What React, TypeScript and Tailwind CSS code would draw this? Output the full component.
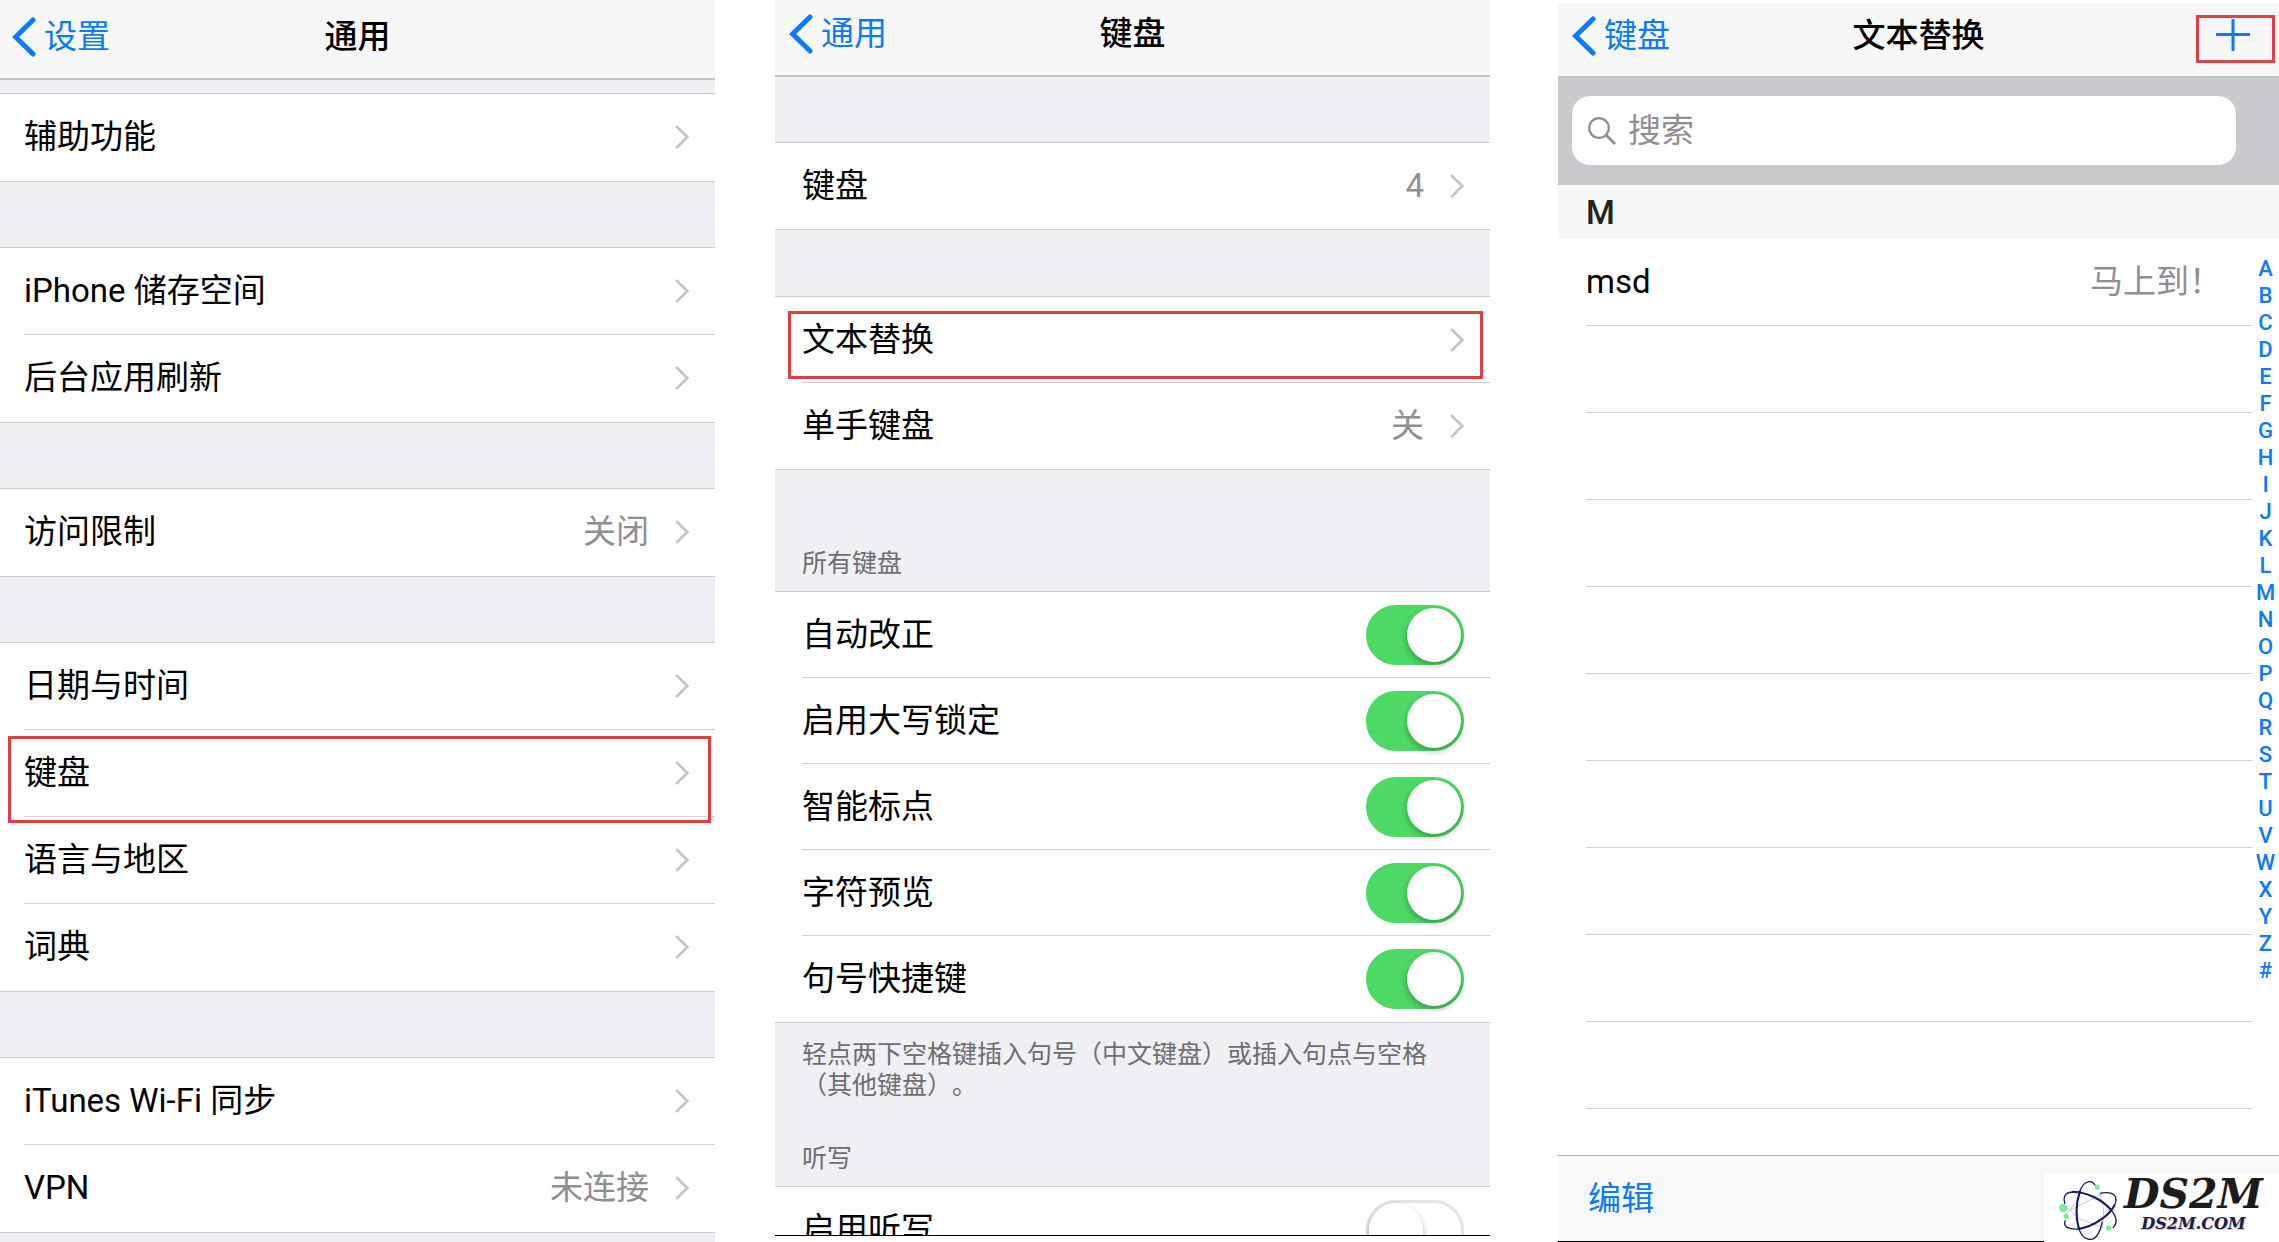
import type { ReactNode } from 'react';

interface RowItem {
    label: string;
    value?: string;
}

const generalGroups: RowItem[][] = [
    [{ label: "辅助功能" }],
    [{ label: "iPhone 储存空间" }, { label: "后台应用刷新" }],
    [{ label: "访问限制", value: "关闭" }],
    [{ label: "日期与时间" }, { label: "键盘" }, { label: "语言与地区" }, { label: "词典" }],
    [{ label: "iTunes Wi-Fi 同步" }, { label: "VPN", value: "未连接" }],
];

const keyboardToggles = ["自动改正", "启用大写锁定", "智能标点", "字符预览", "句号快捷键"];

const indexLetters = "ABCDEFGHIJKLMNOPQRSTUVWXYZ#".split("");

function Chevron() {
    return (
        <svg viewBox="0 0 14 24" className="h-6 w-3.5 shrink-0" fill="none" stroke="#c4c4c9" strokeWidth="2.6">
            <path d="M1.2 1 L12.3 12 L1.2 23" />
        </svg>
    );
}

function NavBar({ back, title, className, children }: { back: string; title: string; className: string; children?: ReactNode }) {
    return (
        <header className={`grid shrink-0 grid-cols-[1fr_auto_1fr] items-center border-b-2 border-[#c2c2c5] bg-[#f7f7f8] ${className}`}>
            <a href="#" className="flex items-center gap-2 text-[#0a7aff]">
                <svg viewBox="0 0 24 40" className="h-10 w-6" fill="none" stroke="currentColor" strokeWidth="5" strokeLinecap="round">
                    <path d="M21 3 L3.6 20 L21 37" />
                </svg>
                {back}
            </a>
            <h2 className="font-medium">{title}</h2>
            <div className="flex justify-end">{children}</div>
        </header>
    );
}

function LinkRow({ item, highlight }: { item: RowItem; highlight?: string }) {
    return (
        <li className="group relative">
            <a href="#" className="flex h-full items-center border-b border-[#d0d0d4] pr-[26px] group-last:border-transparent">
                <span className="flex-1">{item.label}</span>
                {item.value && <span className="mr-[26px] text-[#8e8e93]">{item.value}</span>}
                <Chevron />
            </a>
            {highlight && <span className={`absolute border-3 border-[#e23b40] ${highlight}`} />}
        </li>
    );
}

function ToggleRow({ label, on }: { label: string; on?: boolean }) {
    return (
        <li className="group">
            <label className="flex h-full items-center justify-between border-b border-[#d0d0d4] pr-[26px] group-last:border-transparent">
                {label}
                <input
                    type="checkbox"
                    defaultChecked={on}
                    className="relative h-[60px] w-[98px] appearance-none rounded-full border-3 border-[#e5e5e5] bg-white before:absolute before:top-0 before:left-0 before:size-[54px] before:rounded-full before:bg-white before:shadow-[0_3px_6px_rgba(0,0,0,0.3)] checked:border-[#4cd964] checked:bg-[#4cd964] checked:before:left-[38px]"
                />
            </label>
        </li>
    );
}

function GeneralPanel() {
    return (
        <section className="flex flex-col overflow-hidden bg-[#efeff4]">
            <NavBar back="设置" title="通用" className="h-20 px-3 pb-1" />
            <div className="flex flex-col gap-[65px] pt-[13px]">
                {generalGroups.map((group) => (
                    <ul key={group[0].label} className="grid auto-rows-[87px] border-y border-[#cbcbcf] bg-white pl-6">
                        {group.map((item) => (
                            <LinkRow key={item.label} item={item} highlight={item.label === "键盘" ? "top-1.5 -bottom-1.5 -left-4 right-1 z-10" : undefined} />
                        ))}
                    </ul>
                ))}
            </div>
        </section>
    );
}

function KeyboardPanel() {
    const list = "grid auto-rows-[86px] border-y border-[#cbcbcf] bg-white pl-[27px]";
    return (
        <section className="mb-1.5 flex flex-col overflow-hidden border-b border-black bg-[#efeff4]">
            <NavBar back="通用" title="键盘" className="h-[77px] px-3.5 pb-2" />
            <ul className={`mt-[65px] ${list}`}>
                <LinkRow item={{ label: "键盘", value: "4" }} />
            </ul>
            <ul className={`mt-[66px] ${list}`}>
                <LinkRow item={{ label: "文本替换" }} highlight="top-3.5 bottom-1 -left-3.5 right-[7px]" />
                <LinkRow item={{ label: "单手键盘", value: "关" }} />
            </ul>
            <h3 className="mt-[78px] mb-3 px-[27px] text-[25px] leading-[31px] text-[#6d6d72]">所有键盘</h3>
            <ul className={list}>
                {keyboardToggles.map((label) => (
                    <ToggleRow key={label} label={label} on />
                ))}
            </ul>
            <p className="mt-4 px-[27px] text-[25px] leading-[31px] text-[#6d6d72] [text-spacing-trim:space-all]">
                轻点两下空格键插入句号（中文键盘）或插入句点与空格（其他键盘）。
            </p>
            <h3 className="mt-[42px] mb-3 px-[27px] text-[25px] leading-[31px] text-[#6d6d72]">听写</h3>
            <ul className={list}>
                <ToggleRow label="启用听写" />
            </ul>
        </section>
    );
}

function Logo() {
    return (
        <div className="flex items-start gap-1 bg-white pt-1 pr-4 pl-3.5">
            <svg viewBox="45 20 190 190" className="h-16 w-[62px]" fill="none" stroke="#191d55" strokeLinecap="round">
                <g stroke="#a9abc4" strokeWidth="2">
                    <path d="M66 132 L112 78 M62 98 L110 142 M82 116 L182 64 M172 62 C184 88 188 130 181 165 M110 142 L186 170" />
                </g>
                <path strokeWidth="4" d="M158 38 C145 20 122 28 112 58 M108 168 C118 206 150 218 168 188 C174 178 178 166 180 152" />
                <path strokeWidth="6.5" d="M112 58 C99 95 99 140 109 172" />
                <path strokeWidth="4" d="M66 95 C58 68 72 56 108 61 M205 112 C228 138 227 156 214 169" />
                <path strokeWidth="6.5" d="M90 59 C130 60 178 80 208 115" />
                <path strokeWidth="4" d="M176 63 C222 56 233 78 214 107 M110 173 C76 176 60 166 67 148" />
                <path strokeWidth="6.5" d="M218 101 C202 130 160 164 108 173" />
                <g fill="#7eeaa0" stroke="none">
                    <circle cx="165" cy="45" r="8" />
                    <circle cx="61" cy="109" r="13" />
                    <circle cx="70" cy="135" r="8" />
                    <circle cx="200" cy="170" r="8" />
                </g>
            </svg>
            <div className="flex flex-col items-center font-['DejaVu_Serif','Liberation_Serif',serif] font-bold italic">
                <span className="text-[41px] leading-8 text-[#1c1c1c]">DS2M</span>
                <span className="text-base leading-7 text-[#191d55] [text-shadow:1px_1px_0_#e8bfa4]">DS2M.COM</span>
            </div>
        </div>
    );
}

function ReplacementPanel() {
    return (
        <section className="ml-2 flex flex-col overflow-hidden pt-[3px]">
            <NavBar back="键盘" title="文本替换" className="h-[75px] px-3.5 pb-2">
                <button type="button" aria-label="添加" className="relative mr-[15px] text-[#0a7aff]">
                    <svg viewBox="0 0 34 34" className="size-[34px]" stroke="currentColor" strokeWidth="3">
                        <path d="M17 0 V32 M0 15.5 H34" />
                    </svg>
                    <span className="absolute -top-1 -right-[25px] -bottom-2.5 -left-5 border-3 border-[#dc4146]" />
                </button>
            </NavBar>
            <div className="bg-[#c9c9ce] pt-[18px] pr-[43px] pb-5 pl-3.5">
                <label className="flex h-[69px] items-center gap-3 rounded-[18px] bg-white px-4">
                    <svg viewBox="0 0 28 28" className="size-7 shrink-0" fill="none" stroke="#8e8e93" strokeWidth="2.2">
                        <circle cx="11" cy="11" r="9.8" />
                        <path d="M18 18 L27 27" strokeWidth="2.8" />
                    </svg>
                    <input type="search" aria-label="搜索" placeholder="搜索" className="min-w-0 flex-1 outline-none placeholder:text-[#8e8e93]" />
                </label>
            </div>
            <h3 className="flex h-[54px] shrink-0 items-center bg-[#f7f7f7] pt-0.5 pl-7 font-medium text-[#222]">M</h3>
            <div className="flex min-h-0 flex-1 overflow-hidden">
                <ul className="ml-7 grid flex-1 auto-rows-[87px]">
                    <li className="flex items-center justify-between border-b border-[#d0d0d4] pr-[30px]">
                        <span>msd</span>
                        <span className="text-[#8e8e93]">马上到！</span>
                    </li>
                    {Array.from({ length: 9 }, (_, i) => (
                        <li key={i} className="border-b border-[#d0d0d4]" />
                    ))}
                </ul>
                <nav className="flex w-[27px] flex-col items-center pt-4 text-[22px] leading-[27px] font-medium text-[#0a7aff]">
                    {indexLetters.map((letter) => (
                        <a key={letter} href="#">{letter}</a>
                    ))}
                </nav>
            </div>
            <footer className="flex h-[87px] shrink-0 items-end justify-between border-t border-[#b2b2b5] bg-[#f8f8f8]">
                <div className="flex flex-1 items-center self-stretch border-b border-black pl-[30px]">
                    <button type="button" className="text-[#0a7aff]">编辑</button>
                </div>
                <Logo />
            </footer>
        </section>
    );
}

export default function App() {
    return (
        <main className="grid h-screen grid-cols-[715fr_715fr_729fr] grid-rows-1 gap-x-[60px] overflow-hidden bg-white font-[Roboto,'Noto_Sans_CJK_SC',sans-serif] text-[33px] leading-10 text-black">
            <GeneralPanel />
            <KeyboardPanel />
            <ReplacementPanel />
        </main>
    );
}
